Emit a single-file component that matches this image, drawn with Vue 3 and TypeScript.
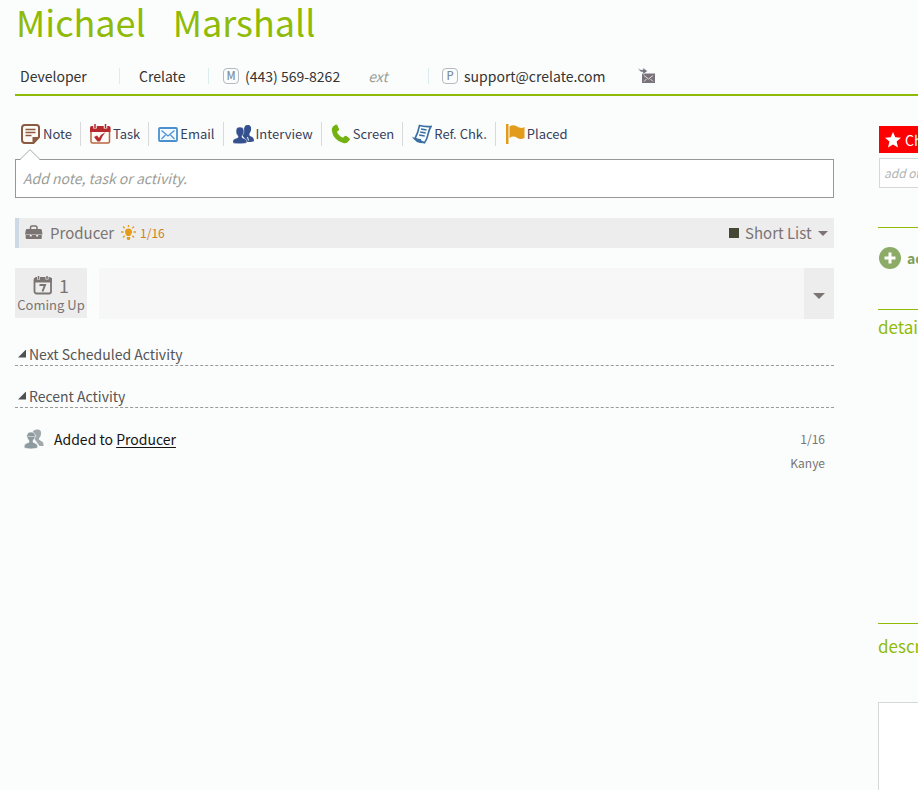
<script setup lang="ts">
import { ref } from 'vue'

interface Action {
  icon: string
  label: string
}

const actions: Action[] = [
  { icon: 'note', label: 'Note' },
  { icon: 'task', label: 'Task' },
  { icon: 'email', label: 'Email' },
  { icon: 'interview', label: 'Interview' },
  { icon: 'screen', label: 'Screen' },
  { icon: 'reference', label: 'Ref. Chk.' },
  { icon: 'placed', label: 'Placed' },
]

const activity = ref('')
const extension = ref('')
const tag = ref('')
const description = ref('')
const stage = ref('Short List')
</script>

<template>
  <div class="page">
    <header class="header">
      <h1 class="name"><span>Michael</span><span>Marshall</span></h1>
      <div class="contact">
        <div class="cell cell-title">Developer</div>
        <div class="cell cell-company">Crelate</div>
        <div class="cell cell-phone">
          <span class="kind">M</span>
          <span>(443) 569-8262</span>
          <input v-model="extension" class="ext" type="text" placeholder="ext" aria-label="Extension" />
        </div>
        <div class="cell cell-mail">
          <span class="kind">P</span>
          <span>support@crelate.com</span>
          <button class="forward" type="button" aria-label="Forward email">
            <svg width="18" height="18" viewBox="0 0 18 18">
              <path d="M4 6.500h13V16H4z" fill="#77727b" />
              <path d="M6 8.500l4.500 3.500L15 8.500M6 14.500l2.500-2.500M15 14.500L12.500 12" fill="none" stroke="#e8dfd4" stroke-width="1" />
              <path d="M0 .5c1 2 2.500 2.300 5 2.300V.8L9.500 4 5 7.500V5.300C2.500 5.300.5 3.500 0 .5z" fill="#77727b" stroke="#fbfdfc" stroke-width=".5" />
            </svg>
          </button>
        </div>
      </div>
    </header>

    <div class="columns">
      <main class="main">
        <nav class="actions" aria-label="Activities">
          <button v-for="action in actions" :key="action.icon" class="action" type="button">
            <svg v-if="action.icon === 'note'" width="20" height="20" viewBox="0 0 20 20">
              <path d="M4 1h11.500Q18 1 18 3.500V13l-5.500 6H4Q1 19 1 16V4Q1 1 4 1z" fill="#fffaf5" stroke="#8b5a42" stroke-width="2" />
              <path d="M4.500 5.500h10M4.500 8.500h10M4.500 11.500h6" stroke="#8b5a42" stroke-width="1.500" />
              <path d="M11.500 19v-6H18z" fill="#8b5a42" />
            </svg>
            <svg v-else-if="action.icon === 'task'" width="21" height="20" viewBox="0 0 21 20">
              <rect x="1" y="3" width="18.500" height="16" rx="1.500" fill="#fffaf8" stroke="#b9653f" stroke-width="1.500" />
              <path d="M0 3.500Q0 2 2 2h16.500Q20.500 2 20.500 3.500V8H0z" fill="#b8292d" />
              <path d="M5 0v4.500M15.500 0v4.500" stroke="#fbfdfc" stroke-width="3.500" />
              <path d="M5 0v4M15.500 0v4" stroke="#b8292d" stroke-width="1.500" />
              <path d="M4 13l3-1.500 2 2.500q2-4 6.500-6-3.500 4-5.500 9.500H7.500z" fill="#b8292d" />
            </svg>
            <svg v-else-if="action.icon === 'email'" width="20" height="20" viewBox="0 0 20 20">
              <rect x="1" y="4" width="18" height="13" rx="1" fill="#f3faff" stroke="#4a90cf" stroke-width="1.800" />
              <path d="M3.500 6.500L10 12l6.500-5.500M3.500 15l4-4M16.500 15l-4-4" fill="none" stroke="#4a90cf" stroke-width="1.200" />
            </svg>
            <svg v-else-if="action.icon === 'interview'" width="21" height="20" viewBox="0 0 21 20">
              <path d="M14.500 1c3 0 4 2 3.500 5-.2 1.700-1 2.800-1.600 3.500v2c1 1 4 1.300 4.300 3.500l.3 2.200c-2 .9-5 .9-7 .5L9 11l2-5c0-3 1-5 3.500-5z" fill="#34508f" />
              <path d="M7 3c3.200 0 4.300 2.200 3.800 5.200-.3 1.700-1 2.900-1.800 3.600v1.700c1.500 1 4.400 1.200 4.800 3.500l.2 1.700c-3 1.500-11 1.500-14.500 0l.2-1.700C.2 14.700 3.500 14.500 5 13.500v-1.700C4 11 3.300 10 3.100 8.200 2.700 5.200 3.700 3 7 3z" fill="#34508f" stroke="#fbfdfc" stroke-width=".5" />
              <path d="M14.500 13l1 3.500" stroke="#fbfdfc" stroke-width="1" />
            </svg>
            <svg v-else-if="action.icon === 'screen'" width="20" height="20" viewBox="0 0 20 20">
              <path d="M2 2.500L4.500.8q1.200-.6 2 .7L8 5q.4 1-.7 1.700L6 7.700q1.500 4 6 6l1.500-1.500q.9-.9 1.900-.3l3 2.300q1 .9.200 1.800l-2 2.200q-1.500 1.500-4.500.8Q2 16 .8 6.500.6 4 2 2.500z" fill="#74b214" />
            </svg>
            <svg v-else-if="action.icon === 'reference'" width="20" height="20" viewBox="0 0 20 20">
              <path d="M7.500 1.500Q13 3 19 2.500q-2 3-3 8t-3.500 8.300L3 14.500Q6 9 7.500 1.500z" fill="#f5fbff" stroke="#3b6ea0" stroke-width="1.600" />
              <path d="M9 5l5.500 1M8.200 8l5.500 1M7.200 11l5.500 1" stroke="#3b6ea0" stroke-width="1.300" />
              <path d="M0 12.500q3 2 9 2.500-.5 3 3.500 4.300Q3 19.500 0 12.500z" fill="#3b6ea0" />
            </svg>
            <svg v-else width="20" height="20" viewBox="0 0 20 20">
              <path d="M1 0h2.500v20H1z" fill="#e39b1b" />
              <path d="M4.500 2.500Q8 0 12 2.500t7.500.5v11Q15.500 16 12 13.700t-7.500.3z" fill="#e39b1b" />
            </svg>
            <span>{{ action.label }}</span>
          </button>
        </nav>

        <div class="composer">
          <svg class="notch" width="20" height="11" viewBox="0 0 20 11">
            <path d="M0 11L10 1l10 10z" fill="#fff" />
            <path d="M0 10.500L10 .7l10 9.800" fill="none" stroke="#a9a9ab" stroke-width="1" />
          </svg>
          <input v-model="activity" type="text" placeholder="Add note, task or activity." aria-label="Add note, task or activity" />
        </div>

        <section class="job">
          <svg width="18" height="16" viewBox="0 0 18 16">
            <path d="M5.500 4V2.500q0-1.500 1.500-1.500h3.500Q12 1 12 2.500V4" fill="none" stroke="#7b7473" stroke-width="1.500" />
            <path d="M2 4h13.500q1 0 1.300 1L17.500 9.500H0L.8 5Q1 4 2 4zM.7 10h4v1.500h2V10h4.500v1.500h2V10h3.600v3q0 1-1 1H1.700q-1 0-1-1z" fill="#7b7473" />
          </svg>
          <span class="job-name">Producer</span>
          <svg width="15" height="16" viewBox="0 0 15 16">
            <path d="M7.500 3.500c2.200 0 3.500 1.500 3.500 3.400 0 1.800-1.500 2.600-1.700 4.100H5.700C5.500 9.500 4 8.700 4 6.900c0-1.900 1.300-3.400 3.500-3.400zM5.800 12h3.400v1.500L8.500 15h-2l-.7-1.500z" fill="#e39b1b" />
            <path d="M7.500 0v2M2 1.500l1.700 1.700M13 1.500l-1.700 1.700M0 7h2.500M12.500 7H15M2 12.500l1.700-1.700M13 12.500l-1.700-1.700" stroke="#e39b1b" stroke-width="1.300" />
          </svg>
          <span class="job-date">1/16</span>
          <span class="swatch"></span>
          <span class="stage">
            <select v-model="stage" aria-label="Stage">
              <option>Short List</option>
            </select>
            <span class="caret"></span>
          </span>
        </section>

        <section class="upcoming">
          <button class="coming" type="button">
            <span class="count">
              <svg width="20" height="20" viewBox="0 0 20 20">
                <rect x="1.500" y="3" width="16.500" height="15.500" rx="2" fill="none" stroke="#7b7473" stroke-width="1.800" />
                <path d="M1 3h18v4.500H1z" fill="#7b7473" />
                <path d="M5.500 0v4.500M14 0v4.500" stroke="#ededed" stroke-width="3" />
                <path d="M5.500 1v3M14 1v3" stroke="#7b7473" stroke-width="1.600" />
                <path d="M6.500 10H12l-2.500 6.500" fill="none" stroke="#7b7473" stroke-width="2" />
              </svg>
              <span>1</span>
            </span>
            <span class="coming-label">Coming Up</span>
          </button>
          <div class="strip"></div>
          <button class="expand" type="button" aria-label="Expand"><span class="caret caret-large"></span></button>
        </section>

        <h2 class="section-title"><span class="fold"></span>Next Scheduled Activity</h2>
        <h2 class="section-title section-recent"><span class="fold"></span>Recent Activity</h2>

        <article class="entry">
          <svg width="20" height="20" viewBox="0 0 20 20">
            <path d="M13 .5c3.500 0 4.500 2 4 4.700-.2 2-1 3-2 3.800v1.500c1.500 1.500 4.500 2 4.500 4.500v2h-4L9 8l-.5-4C9 2 10 .5 13 .5z" fill="#a0a8ab" />
            <path d="M7 3c3 0 4 1.700 4 3.500h.8v1H11c-.2 2-1 3.200-2 4v1.800c1.800.9 4.500 1.200 4.700 4v1.500c-3 1.500-10.500 1.500-13.500 0v-1.500c.2-2.800 3-3.100 4.800-4v-1.800c-1-.8-1.800-2-2-4h-.8v-1H3C3 4.700 4 3 7 3z" fill="#8d9b9f" stroke="#fbfdfc" stroke-width=".6" />
            <path d="M3.500 7.500h7" stroke="#c3cbcd" />
          </svg>
          <p class="entry-text">Added to <a href="#">Producer</a></p>
          <div class="entry-meta"><span>1/16</span><span>Kanye</span></div>
        </article>
      </main>

      <aside class="side">
        <div class="badge">
          <svg width="16" height="16" viewBox="0 0 16 16">
            <path d="M8 0l2.300 5.300 5.700.5-4.400 3.800 1.400 5.900L8 12.500l-5 3 1.400-5.900L0 5.800l5.700-.5z" fill="#fff" />
          </svg>
          <span>Champion</span>
        </div>
        <input v-model="tag" class="tag" type="text" placeholder="add other" aria-label="Add tag" />
        <button class="add" type="button">
          <svg width="22" height="22" viewBox="0 0 22 22">
            <circle cx="11" cy="11" r="11" fill="#8bab66" />
            <path d="M11 5.500v11M5.500 11h11" stroke="#fff" stroke-width="3" />
          </svg>
          <span>add</span>
        </button>
        <h2 class="side-title details">details</h2>
        <h2 class="side-title about">description</h2>
        <textarea v-model="description" aria-label="Description"></textarea>
      </aside>
    </div>
  </div>
</template>

<style>
body {
  background: #fbfdfc;
}
</style>

<style scoped>
.page,
.page * {
  box-sizing: border-box;
}

.page {
  display: flex;
  flex-direction: column;
  min-height: 100vh;
  padding-left: 15px;
  overflow: hidden;
  color: #333;
  background: #fbfdfc;
  font-family: "Noto Sans CJK SC", "Noto Sans", sans-serif;
  font-size: 14px;
  line-height: 20px;
}

svg {
  display: block;
  flex: none;
}

button,
input,
select,
textarea {
  margin: 0;
  padding: 0;
  border: 0;
  border-radius: 0;
  outline: 0;
  background: none;
  color: inherit;
  font: inherit;
}

button {
  cursor: pointer;
}

h1,
h2,
p {
  margin: 0;
  font-weight: 400;
}

.header {
  border-bottom: 2px solid #8fba06;
}

.name {
  display: flex;
  gap: 27px;
  padding-left: 1px;
  color: #8fba06;
  font-size: 36px;
  line-height: 42px;
}

.contact {
  display: flex;
  align-items: center;
  height: 37px;
  margin-top: 15px;
}

.cell {
  display: flex;
  flex: none;
  align-items: center;
  height: 16px;
  border-right: 1px solid #dcebeb;
  white-space: nowrap;
}

.cell-title {
  width: 105px;
  padding-left: 5px;
}

.cell-company {
  width: 89px;
  padding-left: 19px;
}

.cell-phone {
  width: 220px;
  padding-left: 14px;
}

.cell-mail {
  padding-left: 13px;
  border-right: 0;
}

.kind {
  width: 16px;
  height: 16px;
  margin-right: 6px;
  border: 1px solid #b5b9c0;
  border-radius: 4px;
  color: #7f8f99;
  font-size: 11px;
  font-weight: 500;
  line-height: 13px;
  text-align: center;
}

.ext {
  width: 40px;
  margin-left: 28px;
}

input::placeholder {
  color: #9a9d98;
  font-style: italic;
  opacity: 1;
}

.forward {
  margin-left: 33px;
}

.columns {
  display: grid;
  flex: 1;
  grid-template-columns: minmax(0, 1fr) 40px;
  gap: 44px;
}

.main {
  padding-top: 26px;
}

.actions {
  display: flex;
  height: 24px;
}

.action {
  display: flex;
  align-items: center;
  gap: 2px;
  padding: 0 8px 0 9px;
  border-right: 1px solid #d9d9db;
  color: #37415c;
  font-size: 13px;
  white-space: nowrap;
}

.action:first-child {
  padding-left: 6px;
}

.action:last-child {
  border-right: 0;
}

.composer {
  position: relative;
  height: 39px;
  margin-top: 13px;
  border: 1px solid #98989a;
  background: #fff;
}

.composer input {
  display: block;
  width: 100%;
  height: 36px;
  padding: 0 7px;
}

.notch {
  position: absolute;
  top: -11px;
  left: 4px;
}

.job {
  display: flex;
  align-items: center;
  height: 30px;
  margin-top: 20px;
  padding: 0 6px;
  border-left: 4px solid #cdd9e4;
  background: #ededed;
  color: #7b7473;
}

.job-name {
  margin: 0 7px;
  font-size: 15px;
}

.job-date {
  margin-left: 4px;
  color: #d0801c;
  font-size: 12px;
}

.swatch {
  width: 10px;
  height: 10px;
  margin: 0 6px 0 auto;
  background: #474735;
}

.stage {
  display: flex;
  align-items: center;
  gap: 6px;
}

.stage select {
  appearance: none;
  font-size: 15px;
}

.caret {
  border: 5px solid transparent;
  border-top-color: #7b7473;
  border-bottom: 0;
}

.caret-large {
  border-width: 6px 6px 0;
}

.upcoming {
  display: flex;
  align-items: flex-start;
  margin-top: 20px;
}

.coming {
  display: flex;
  flex-direction: column;
  align-items: center;
  width: 72px;
  height: 50px;
  padding-top: 7px;
  background: #ededed;
  color: #7b7473;
  white-space: nowrap;
}

.count {
  display: flex;
  align-items: center;
  justify-content: center;
  gap: 6px;
  height: 20px;
  font-size: 18px;
  line-height: 20px;
}

.coming-label {
  font-size: 13px;
}

.strip {
  flex: 1;
  height: 51px;
  margin-left: 12px;
  background: #f7f7f7;
}

.expand {
  display: flex;
  align-items: center;
  justify-content: center;
  width: 30px;
  height: 51px;
  padding-top: 4px;
  background: #ededed;
}

.section-title {
  display: flex;
  align-items: center;
  height: 24px;
  margin-top: 23px;
  padding-left: 3px;
  border-bottom: 1px dashed #999;
  color: #555;
  font-size: 14px;
}

.section-recent {
  margin-top: 18px;
}

.fold {
  width: 8px;
  height: 8px;
  margin-right: 3px;
  background: #505052;
  clip-path: polygon(100% 0, 100% 100%, 0 100%);
}

.entry {
  display: flex;
  align-items: flex-start;
  margin-top: 21px;
  padding: 0 9px;
}

.entry-text {
  margin-left: 10px;
  color: #151515;
}

.entry-text a {
  color: inherit;
  text-underline-offset: 2px;
}

.entry-meta {
  display: flex;
  flex-direction: column;
  gap: 4px;
  margin-left: auto;
  color: #757575;
  font-size: 12px;
  text-align: right;
}

.side {
  display: flex;
  flex-direction: column;
  min-width: 0;
  padding-top: 30px;
  overflow: hidden;
  white-space: nowrap;
}

.badge {
  display: flex;
  align-items: center;
  gap: 4px;
  height: 27px;
  margin-left: 1px;
  padding-left: 6px;
  background: #f00;
  color: #fff;
}

.tag {
  flex: none;
  width: 140px;
  height: 30px;
  margin: 5px 0 39px 1px;
  padding: 0 4px 2px;
  border: 1px solid #d5d8d8;
  background: #fff;
  font-size: 12px;
}

.tag::placeholder {
  color: #b0b4b2;
}

.add {
  display: flex;
  flex: none;
  align-items: center;
  gap: 6px;
  height: 82px;
  padding: 0 0 22px 1px;
  border-top: 1px solid #8fba06;
  color: #7fa05a;
  font-weight: 700;
}

.side-title {
  flex: none;
  border-top: 1px solid #8fba06;
  color: #8fba06;
  font-size: 17px;
  line-height: 24px;
}

.details {
  height: 314px;
  padding-top: 5px;
}

.about {
  height: 79px;
  padding-top: 10px;
}

textarea {
  flex: 1;
  width: 240px;
  min-height: 80px;
  border: 1px solid #d5d8d8;
  border-bottom: 0;
  background: #fff;
  resize: none;
}
</style>
